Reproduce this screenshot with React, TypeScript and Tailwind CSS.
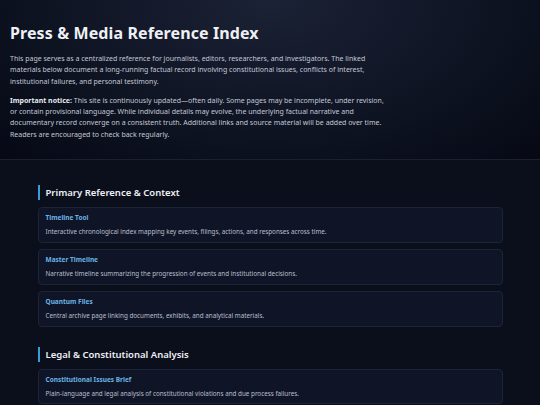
import React from "react";

const sections = [
  {
    title: "Primary Reference & Context",
    items: [
      { t: "Timeline Tool", d: "Interactive chronological index mapping key events, filings, actions, and responses across time." },
      { t: "Master Timeline", d: "Narrative timeline summarizing the progression of events and institutional decisions." },
      { t: "Quantum Files", d: "Central archive page linking documents, exhibits, and analytical materials." },
    ],
  },
  {
    title: "Legal & Constitutional Analysis",
    items: [
      { t: "Constitutional Issues Brief", d: "Plain-language and legal analysis of constitutional violations and due process failures." },
    ],
  },
];

export default function App() {
  return (
    <div className="w-[540px] h-[405px] overflow-hidden bg-[#0b0f1c] text-gray-200" style={{ fontFamily: '"Noto Sans", "Open Sans", sans-serif' }}>
      <header className="h-[160px] border-b border-[#1a2132] bg-[radial-gradient(ellipse_at_50%_0%,#1b2235_0%,#111727_45%,#060914_100%)] px-[10px] pt-[22px]">
        <h1 className="text-[16px] leading-[22px] font-bold text-[#eef0f4] tracking-[0.1px]">Press &amp; Media Reference Index</h1>
        <p className="mt-[9px] text-[7px] leading-[11.3px] text-[#c3c8d4] max-w-[376px]">
          This page serves as a centralized reference for journalists, editors, researchers, and investigators. The linked materials below document a long-running factual record involving constitutional issues, conflicts of interest, institutional failures, and personal testimony.
        </p>
        <p className="mt-[8px] text-[7px] leading-[11.3px] text-[#c3c8d4] max-w-[376px]">
          <strong className="font-bold text-[#e6e9ef]">Important notice:</strong> This site is continuously updated—often daily. Some pages may be incomplete, under revision, or contain provisional language. While individual details may evolve, the underlying factual narrative and documentary record converge on a consistent truth. Additional links and source material will be added over time. Readers are encouraged to check back regularly.
        </p>
      </header>
      <main className="mx-auto w-[465px] pt-[25px]">
        {sections.map((s) => (
          <section key={s.title} className="mb-[20px]">
            <h2 className="border-l-2 border-[#3a9bd5] pl-[6px] text-[9.5px] leading-[15px] font-semibold text-[#eef0f4]">{s.title}</h2>
            <div className="mt-[7px] flex flex-col gap-[6.5px]">
              {s.items.map((it) => (
                <div key={it.t} className="rounded-[4px] border border-[#1c2438] bg-[#0f1526] px-[7px] pt-[5px] pb-[4.5px]">
                  <div className="text-[6.5px] leading-[10px] font-bold text-[#6ab4e6]">{it.t}</div>
                  <div className="mt-[4px] text-[6.3px] leading-[10px] text-[#b9bfcc]">{it.d}</div>
                </div>
              ))}
            </div>
          </section>
        ))}
      </main>
    </div>
  );
}
